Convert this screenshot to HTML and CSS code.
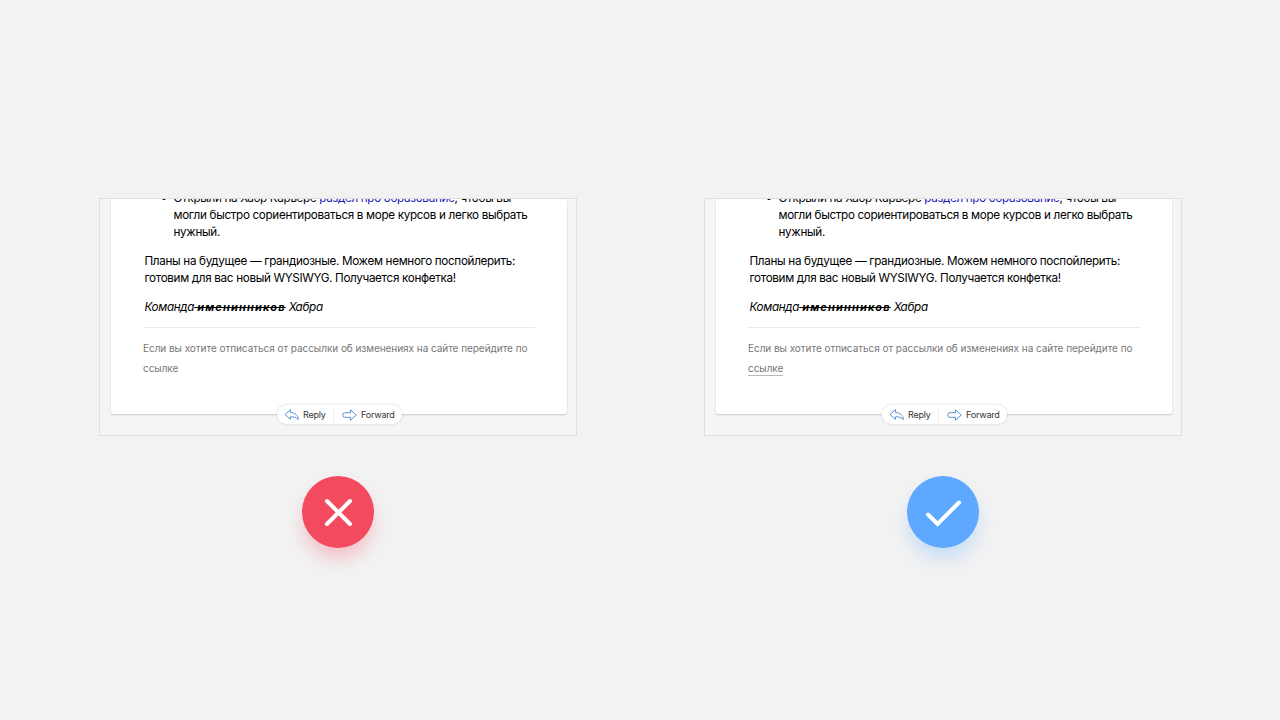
FILE: index.html
```html
<!DOCTYPE html>
<html lang="ru">
<head>
  <meta charset="UTF-8" />
  <title>Ссылка отписки</title>
  <link rel="stylesheet" href="styles.css">
</head>
<body>
  <main class="compare">
    <section class="example">
      <div class="frame">
        <article class="mail">
          <ul class="news">
            <li>Открыли на Хабр Карьере <a href="#">раздел про образование</a>, чтобы вы<br>могли быстро сориентироваться в море курсов и легко выбрать<br>нужный.</li>
          </ul>
          <p class="text">Планы на будущее — грандиозные. Можем немного поспойлерить:<br>готовим для вас новый WYSIWYG. Получается конфетка!</p>
          <p class="text sign">Команда<s> <b>именинников</b></s> Хабра</p>
          <footer class="unsubscribe">Если вы хотите отписаться от рассылки об изменениях на сайте перейдите по<br><span>ссылке</span></footer>
        </article>
        <div class="actions">
          <span class="action reply">
            <svg width="16" height="12" viewBox="0 0 16 12"><path d="M6.4.7 1 5.500l5.400 4.800V7.800c3-.2 5.600.4 8 2.700C14 6.300 11 3.600 6.400 3.400z"/></svg>
            Reply
          </span>
          <span class="action forward">
            <svg width="16" height="12" viewBox="0 0 16 12"><path d="M8.500.8 14.300 6 8.500 11.200V8.300H2.500Q1 8.300 1 6.800V5.200Q1 3.700 2.500 3.700h6z"/></svg>
            Forward
          </span>
        </div>
      </div>
      <div class="mark bad">
        <svg width="72" height="72" viewBox="0 0 72 72"><path d="M25 25 48 48M48 25 25 48"/></svg>
      </div>
    </section>

    <section class="example">
      <div class="frame">
        <article class="mail">
          <ul class="news">
            <li>Открыли на Хабр Карьере <a href="#">раздел про образование</a>, чтобы вы<br>могли быстро сориентироваться в море курсов и легко выбрать<br>нужный.</li>
          </ul>
          <p class="text">Планы на будущее — грандиозные. Можем немного поспойлерить:<br>готовим для вас новый WYSIWYG. Получается конфетка!</p>
          <p class="text sign">Команда<s> <b>именинников</b></s> Хабра</p>
          <footer class="unsubscribe">Если вы хотите отписаться от рассылки об изменениях на сайте перейдите по<br><span class="link">ссылке</span></footer>
        </article>
        <div class="actions">
          <span class="action reply">
            <svg width="16" height="12" viewBox="0 0 16 12"><path d="M6.4.7 1 5.500l5.400 4.800V7.800c3-.2 5.600.4 8 2.700C14 6.300 11 3.600 6.400 3.400z"/></svg>
            Reply
          </span>
          <span class="action forward">
            <svg width="16" height="12" viewBox="0 0 16 12"><path d="M8.500.8 14.300 6 8.500 11.200V8.300H2.500Q1 8.300 1 6.800V5.200Q1 3.700 2.500 3.700h6z"/></svg>
            Forward
          </span>
        </div>
      </div>
      <div class="mark good">
        <svg width="72" height="72" viewBox="0 0 72 72"><path d="M21 38.500 30.500 48 52 26.500"/></svg>
      </div>
    </section>
  </main>
</body>
</html>
```
FILE: styles.css
```css
* {
  box-sizing: border-box;
  margin: 0;
  padding: 0;
}

body {
  height: 720px;
  background: #f2f2f2;
  font-family: Inter, sans-serif;
  overflow: hidden;
}

.compare {
  display: flex;
  gap: 127px;
  padding: 198px 0 0 99px;
}

.example {
  display: flex;
  flex-direction: column;
  align-items: center;
  gap: 40px;
  width: 478px;
}

.frame {
  position: relative;
  width: 478px;
  height: 238px;
  padding: 0 9px 0 11px;
  border: 1px solid #dedfe1;
  background: #f5f5f7;
  overflow: hidden;
}

.mail {
  display: flow-root;
  height: 215px;
  padding: 0 32px 0 33px;
  background: #fff;
  border-radius: 0 0 3px 3px;
  box-shadow: 0 1px 2px rgba(0, 0, 0, 0.18);
  color: #000;
  font-size: 11.7px;
  line-height: 17.2px;
  letter-spacing: -0.33px;
  white-space: nowrap;
}

.news {
  margin-top: -9px;
  padding-left: 29.5px;
  list-style: none;
}

.news li {
  position: relative;
}

.news li::before {
  content: "";
  position: absolute;
  left: -12px;
  top: 6px;
  width: 4px;
  height: 4px;
  border-radius: 50%;
  background: #000;
}

.news a {
  color: #1717b5;
  text-decoration: none;
}

.text {
  margin-top: 11.4px;
  padding-left: 0.5px;
}

.sign {
  font-style: italic;
}

.sign s {
  text-decoration-thickness: 1px;
}

.sign b {
  font-size: 11px;
  letter-spacing: 1.15px;
}

.unsubscribe {
  margin: 11px 0 0 -1px;
  padding-top: 10px;
  border-top: 1px solid #ebebeb;
  color: #777;
  font-size: 10px;
  line-height: 20px;
  letter-spacing: -0.045px;
}

.link {
  padding-bottom: 1px;
  border-bottom: 1px solid #bbb;
}

.actions {
  position: absolute;
  left: 177px;
  top: 206px;
  display: flex;
  align-items: center;
  width: 125px;
  height: 19px;
  border-radius: 10px;
  background: #fff;
  box-shadow: 0 0 3px rgba(0, 0, 0, 0.16);
  color: #333;
  font-size: 9px;
  letter-spacing: -0.2px;
}

.action {
  display: flex;
  align-items: center;
  gap: 3px;
  padding-left: 7px;
  height: 14px;
}

.reply {
  width: 56px;
}

.forward {
  border-left: 1px solid #eee;
  padding-left: 8px;
}

.action svg {
  flex: none;
  fill: none;
  stroke: #4a86cf;
  stroke-width: 0.9;
  stroke-linejoin: round;
}

.mark {
  width: 72px;
  height: 72px;
  border-radius: 50%;
}

.mark svg {
  display: block;
  fill: none;
  stroke: #fff;
  stroke-width: 4;
  stroke-linecap: round;
}

.bad {
  background: #f44a5f;
  box-shadow: 0 12px 18px -2px rgba(244, 74, 95, 0.3);
}

.good {
  background: #5ea8ff;
  box-shadow: 0 12px 18px -2px rgba(94, 168, 255, 0.3);
}
```
